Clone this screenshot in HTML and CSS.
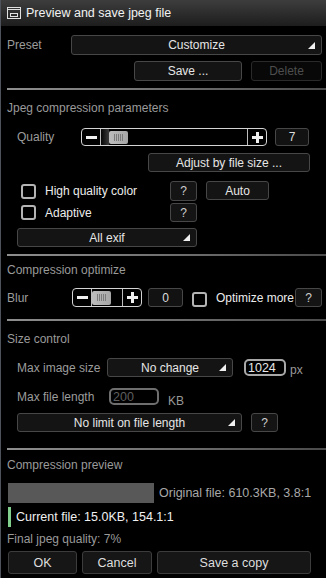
FILE: index.html
```html
<!DOCTYPE html>
<html>
<head>
<meta charset="utf-8">
<link rel="stylesheet" href="styles.css">
</head>
<body>
<div class="titlebar">
  <svg class="ticon" width="14" height="12" viewBox="0 0 14 12"><rect x="0.5" y="0.5" width="13" height="11" fill="none" stroke="#e0e0e0"/><line x1="1" y1="2.5" x2="13" y2="2.5" stroke="#e0e0e0"/><rect x="3.5" y="6.5" width="7" height="3" fill="none" stroke="#e0e0e0"/></svg>
  <span>Preview and save jpeg file</span>
</div>
<div class="panel">
  <div class="row r-preset">
    <span class="lbl w-preset">Preset</span>
    <div class="btn dd grow">Customize</div>
  </div>
  <div class="row r-save">
    <div class="btn b-save">Save ...</div>
    <div class="btn b-delete">Delete</div>
  </div>
  <div class="sep s1"></div>

  <div class="sect t1">Jpeg compression parameters</div>
  <div class="row r-quality">
    <span class="lbl w-quality">Quality</span>
    <div class="slider sl-q">
      <span class="sl-end minus"><svg width="11" height="3" viewBox="0 0 11 3"><rect width="11" height="3" fill="#f0f0f0"/></svg></span>
      <span class="track">
        <span class="shadow"></span>
        <span class="thumb"></span>
      </span>
      <span class="sl-end plus"><svg width="11" height="11" viewBox="0 0 11 11"><rect x="0" y="4" width="11" height="3" fill="#f0f0f0"/><rect x="4" y="0" width="3" height="11" fill="#f0f0f0"/></svg></span>
    </div>
    <div class="btn val v-q">7</div>
  </div>
  <div class="row r-adjust">
    <div class="btn b-adjust">Adjust by file size ...</div>
  </div>
  <div class="row r-hq">
    <span class="cb"></span>
    <span class="cbtext w-cb">High quality color</span>
    <div class="btn q">?</div>
    <div class="btn b-auto">Auto</div>
  </div>
  <div class="row r-adaptive">
    <span class="cb"></span>
    <span class="cbtext w-cb">Adaptive</span>
    <div class="btn q">?</div>
  </div>
  <div class="row r-exif">
    <div class="btn dd b-exif">All exif</div>
  </div>
  <div class="sep s2"></div>

  <div class="sect t2">Compression optimize</div>
  <div class="row r-blur">
    <span class="lbl w-blur">Blur</span>
    <div class="slider sl-b">
      <span class="sl-end minus"><svg width="11" height="3" viewBox="0 0 11 3"><rect width="11" height="3" fill="#f0f0f0"/></svg></span>
      <span class="track">
        <span class="thumb"></span>
      </span>
      <span class="sl-end plus"><svg width="11" height="11" viewBox="0 0 11 11"><rect x="0" y="4" width="11" height="3" fill="#f0f0f0"/><rect x="4" y="0" width="3" height="11" fill="#f0f0f0"/></svg></span>
    </div>
    <div class="btn val v-b">0</div>
    <span class="cb cb-opt"></span>
    <span class="cbtext opt">Optimize more</span>
    <div class="btn q q-right">?</div>
  </div>
  <div class="sep s3"></div>

  <div class="sect t3">Size control</div>
  <div class="row r-maxsize">
    <span class="lbl w-maxsize">Max image size</span>
    <div class="btn dd b-nochange">No change</div>
    <span class="field f-1024">1024</span>
    <span class="unit u-px">px</span>
  </div>
  <div class="row r-maxlen">
    <span class="lbl w-maxlen">Max file length</span>
    <span class="field f-200">200</span>
    <span class="unit u-kb">KB</span>
  </div>
  <div class="row r-nolimit">
    <div class="btn dd b-nolimit">No limit on file length</div>
    <div class="btn q q-nl">?</div>
  </div>
  <div class="sep s4"></div>

  <div class="sect t4">Compression preview</div>
  <div class="row r-orig">
    <span class="bar-orig"></span>
    <span class="info-orig">Original file: 610.3KB, 3.8:1</span>
  </div>
  <div class="row r-cur">
    <span class="bar-cur"></span>
    <span class="info-cur">Current file: 15.0KB, 154.1:1</span>
  </div>
  <div class="final">Final jpeg quality: 7%</div>
  <div class="row r-buttons">
    <div class="btn fb b-ok">OK</div>
    <div class="btn fb b-cancel">Cancel</div>
    <div class="btn fb b-copy">Save a copy</div>
  </div>
</div>
</body>
</html>
```

FILE: styles.css
```css
html, body {
  margin: 0;
  padding: 0;
}
body {
  width: 326px;
  height: 578px;
  overflow: hidden;
  background: #000;
  border-left: 1px solid #4e535a;
  box-sizing: border-box;
  font-family: "Liberation Sans", Arial, sans-serif;
  font-size: 12px;
  color: #e2e2e2;
}
.titlebar {
  height: 26px;
  display: flex;
  align-items: center;
  gap: 5px;
  padding-left: 6px;
  background: linear-gradient(#3d3d3d, #1d1d1d);
  color: #f2f2f2;
  font-size: 12.5px;
}
.ticon { display: block; }
.panel {
  padding: 0 4px 0 6px;
}
.row {
  display: flex;
  align-items: center;
}
.lbl { color: #9c9c9c; flex: none; }
.btn {
  box-sizing: border-box;
  display: flex;
  align-items: center;
  justify-content: center;
  flex: none;
  border: 1px solid #474747;
  border-radius: 3px;
  background: #141414;
  color: #e6e6e6;
  height: 100%;
}
.grow { flex: 1; }
.dd { position: relative; }
.dd::after {
  content: "";
  position: absolute;
  right: 6px;
  bottom: 5px;
  width: 0;
  height: 0;
  border-left: 7px solid transparent;
  border-bottom: 7px solid #f0f0f0;
}

/* preset */
.r-preset { margin-top: 9px; height: 20px; }
.w-preset { width: 64px; }
.r-save { margin-top: 6px; height: 20px; justify-content: flex-end; }
.b-save { width: 108px; margin-right: 9px; }
.b-delete { width: 71px; border-color: #2a2a2a; background: #080808; color: #4e4e4e; }

.sep {
  height: 2px;
  margin-right: -4px;
  background: linear-gradient(to right, #8e8e8e, #6a6a6a 60%, #4a4a4a);
}
.s1 { margin-top: 7px; }
.s2 { margin-top: 7px; }
.s3 { margin-top: 12px; }
.s4 { margin-top: 16px; }

.sect {
  height: 16px;
  line-height: 16px;
  color: #9a9a9a;
}
.t1 { margin-top: 10px; }
.t2 { margin-top: 6px; }
.t3 { margin-top: 10px; }
.t4 { margin-top: 7px; }

/* quality */
.r-quality { margin-top: 12px; height: 18px; }
.w-quality { width: 64px; padding-left: 10px; }
.slider {
  box-sizing: border-box;
  height: 100%;
  display: flex;
  border: 1px solid #d4d4d4;
  border-radius: 4px;
  background: #000;
  flex: none;
}
.sl-q { width: 186px; }
.sl-b { width: 70px; }
.sl-end {
  width: 18px;
  display: flex;
  align-items: center;
  justify-content: center;
  flex: none;
}
.sl-end svg { display: block; }
.minus { border-right: 1px solid #bdbdbd; }
.plus { border-left: 1px solid #bdbdbd; }
.track {
  flex: 1;
  display: flex;
  align-items: center;
}
.shadow {
  width: 8px;
  height: 100%;
  background: linear-gradient(to right, #050505, #3a3a3a);
}
.thumb {
  box-sizing: border-box;
  width: 19px;
  height: 13px;
  border-radius: 2px;
  background:
    repeating-linear-gradient(to right, #7a7a7a 0 1px, transparent 1px 2px) center / 9px 7px no-repeat,
    linear-gradient(to right, #bdbdbd, #a6a6a6);
}
.sl-b .thumb { height: 14px; }
.val { background: #121212; color: #dcdcdc; }
.v-q { width: 34px; margin-left: 8px; }

.r-adjust { margin-top: 7px; height: 19px; }
.b-adjust { width: 162px; margin-left: 141px; }

/* checkboxes */
.cb {
  box-sizing: border-box;
  width: 15px;
  height: 15px;
  border: 2px solid #b4b4b4;
  border-radius: 3px;
  flex: none;
}
.r-hq .cb, .r-adaptive .cb { margin-left: 14px; }
.cbtext { color: #ececec; flex: none; }
.w-cb { width: 125px; margin-left: 9px; }
.r-hq { margin-top: 9px; height: 20px; }
.r-adaptive { margin-top: 2px; height: 19px; }
.q { width: 27px; color: #cfcfcf; }
.b-auto { width: 63px; margin-left: 9px; height: 19px; align-self: flex-start; }
.r-exif { margin-top: 6px; height: 19px; }
.b-exif { width: 180px; margin-left: 10px; }

/* blur */
.r-blur { margin-top: 10px; height: 19px; }
.w-blur { width: 65px; }
.v-b { width: 35px; margin-left: 6px; }
.cb-opt { margin-left: 9px; margin-top: 4px; }
.opt { margin-left: 9px; }
.q-right { margin-left: auto; }

/* size control */
.r-maxsize { margin-top: 11px; height: 19px; }
.w-maxsize { width: 90px; padding-left: 10px; }
.b-nochange { width: 126px; }
.field {
  box-sizing: border-box;
  display: flex;
  align-items: center;
  padding-left: 2px;
  border-radius: 5px;
  flex: none;
}
.f-1024 {
  width: 42px;
  height: 17px;
  margin-left: 11px;
  border: 2px solid #a8a8a8;
  color: #e6e6e6;
  font-size: 12.5px;
}
.unit { color: #999; flex: none; }
.u-px { margin-left: 4px; margin-top: 4px; }
.r-maxlen { margin-top: 11px; height: 17px; }
.w-maxlen { width: 92px; padding-left: 10px; }
.f-200 {
  width: 50px;
  height: 17px;
  border: 2px solid #6e6e6e;
  color: #5e5e5e;
  font-size: 12.5px;
}
.u-kb { margin-left: 9px; margin-top: 8px; }
.r-nolimit { margin-top: 8px; height: 19px; }
.b-nolimit { width: 225px; margin-left: 10px; }
.q-nl { margin-left: 9px; }

/* preview */
.r-orig { margin-top: 10px; height: 20px; }
.bar-orig {
  width: 146px;
  height: 100%;
  margin-left: 1px;
  background: #585858;
  flex: none;
}
.info-orig { margin-left: 5px; color: #a8a8a8; font-size: 12.5px; }
.r-cur { margin-top: 4px; height: 20px; }
.bar-cur {
  width: 3px;
  height: 100%;
  margin-left: 1px;
  background: #80cf8c;
  flex: none;
}
.info-cur { margin-left: 5px; color: #f0f0f0; font-size: 12.5px; }
.final {
  margin-top: 4px;
  height: 16px;
  line-height: 16px;
  color: #9a9a9a;
}
.r-buttons { margin-top: 4px; height: 23px; }
.fb { background: #161616; border-color: #3c3c3c; color: #dedede; font-size: 12.5px; }
.b-ok { width: 69px; margin-left: 1px; }
.b-cancel { width: 70px; margin-left: 5px; }
.b-copy { width: 154px; margin-left: 5px; }
```
